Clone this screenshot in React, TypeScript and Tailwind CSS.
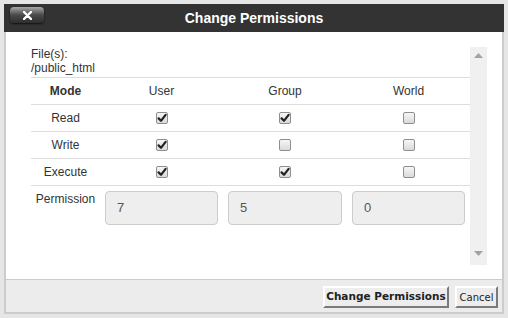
import React from "react";

const font = { fontFamily: '"Liberation Sans", Arial, sans-serif' };

function Check({ on }: { on: boolean }) {
  return (
    <span className="inline-flex items-center justify-center w-[12px] h-[12px] border border-[#8e8e8e] rounded-[2px] bg-gradient-to-b from-[#f6f6f6] to-[#dadada]">
      {on && (
        <svg width="10" height="10" viewBox="0 0 10 10">
          <path d="M1.6 5.4 L4 7.8 L8.6 1.8" fill="none" stroke="#222" strokeWidth="2.2" strokeLinecap="round" strokeLinejoin="round" />
        </svg>
      )}
    </span>
  );
}

const rows = [
  { label: "Read", perms: [true, true, false] },
  { label: "Write", perms: [true, false, false] },
  { label: "Execute", perms: [true, true, false] },
];

export default function App() {
  return (
    <div className="w-[508px] h-[318px] bg-[#e6e6e6] pt-[4px] pl-[4px] overflow-hidden" style={font}>
      <div className="w-[500px]">
        {/* title bar */}
        <div className="relative h-[28px] bg-[#333] flex items-center justify-center">
          <button className="absolute left-[6px] top-[3px] w-[34px] h-[16px] rounded-[4px] bg-gradient-to-b from-[#a9a9a9] via-[#4a4a4a] to-[#2e2e2e] shadow-[0_1px_2px_#111] flex items-center justify-center">
            <svg width="9" height="9" viewBox="0 0 9 9">
              <path d="M1 1 L8 8 M8 1 L1 8" stroke="#fff" strokeWidth="2.4" strokeLinecap="round" />
            </svg>
          </button>
          <span className="text-white font-bold text-[14px]">Change Permissions</span>
        </div>

        <div className="border-x-2 border-b-2 border-[#ccc]">
          {/* body */}
          <div className="h-[247px] bg-white pt-[15px] pl-[25px] flex text-[12px] text-[#333]">
            <div className="w-[439px] h-[218px]">
              <div className="leading-[14px]">File(s):</div>
              <div className="leading-[14px]">/public_html</div>
              <div className="mt-[2px]">
                <div className="grid grid-cols-[69px_123px_124px_123px] h-[27px] border-t border-[#ddd] items-center text-center">
                  <span className="font-bold">Mode</span>
                  <span>User</span>
                  <span>Group</span>
                  <span>World</span>
                </div>
                {rows.map((r) => (
                  <div key={r.label} className="grid grid-cols-[69px_123px_124px_123px] h-[27px] border-t border-[#ddd] items-center text-center">
                    <span>{r.label}</span>
                    {r.perms.map((p, i) => (
                      <span key={i} className="flex justify-center">
                        <Check on={p} />
                      </span>
                    ))}
                  </div>
                ))}
                <div className="grid grid-cols-[69px_123px_124px_123px] border-t border-[#ddd] pt-[5px]">
                  <span className="text-center leading-[14px] pt-[1px]">Permission</span>
                  {["7", "5", "0"].map((v) => (
                    <span key={v} className="px-[5px]">
                      <span className="flex items-center h-[34px] border border-[#ccc] rounded-[4px] bg-[#eee] pl-[11px] text-[13px] text-[#555]">
                        {v}
                      </span>
                    </span>
                  ))}
                </div>
              </div>
            </div>
            {/* scrollbar */}
            <div className="w-[17px] h-[218px] bg-[#f0f0f0] flex flex-col items-center justify-between pt-[6px] pb-[9px]">
              <svg width="9" height="5" viewBox="0 0 9 5">
                <path d="M0 5 L4.5 0 L9 5 Z" fill="#a3a3a3" />
              </svg>
              <svg width="9" height="5" viewBox="0 0 9 5">
                <path d="M0 0 L4.5 5 L9 0 Z" fill="#a3a3a3" />
              </svg>
            </div>
          </div>

          {/* footer */}
          <div className="h-[33px] border-t border-[#ccc] bg-[#ececec] flex justify-end items-start pt-[6px] pr-[4px] gap-[6px]">
            <button
              className="h-[22px] w-[126px] bg-[#ededed] border-2 border-t-white border-l-white border-r-[#7a7a7a] border-b-[#7a7a7a] text-[10.5px] font-bold text-[#222] flex items-center justify-center"
              style={{ fontFamily: '"DejaVu Sans", Verdana, sans-serif' }}
            >
              Change Permissions
            </button>
            <button
              className="h-[22px] w-[43px] bg-[#ededed] border-2 border-t-white border-l-white border-r-[#7a7a7a] border-b-[#7a7a7a] text-[10px] text-[#222] flex items-center justify-center"
              style={{ fontFamily: '"DejaVu Sans", Verdana, sans-serif' }}
            >
              Cancel
            </button>
          </div>
        </div>
      </div>
    </div>
  );
}
